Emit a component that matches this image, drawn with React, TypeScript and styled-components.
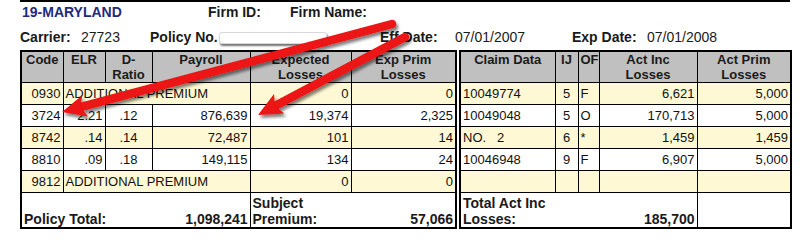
import React from "react";
import styled, { createGlobalStyle } from "styled-components";

const GlobalStyle = createGlobalStyle`
  body {
    margin: 0;
    background: #fff;
    font-family: "Liberation Sans", Arial, sans-serif;
    color: #111;
  }
`;

const Page = styled.div`
  position: relative;
  width: 805px;
  height: 243px;
  padding-left: 20px;
  box-sizing: border-box;
`;

const Header = styled.div`
  width: 770px;
  border-top: 2px solid #000;
`;

const HeaderRow = styled.div`
  display: flex;
  align-items: center;
  height: 20px;
  font-size: 14px;
`;

const SecondRow = styled(HeaderRow)`
  height: 18px;
  margin-top: 6px;
  margin-bottom: 4px;
`;

const Title = styled.span`
  width: 186px;
  padding-left: 2px;
  font-weight: bold;
  color: #1f2a7c;
`;

const Label = styled.span<{ $w: number }>`
  width: ${(p) => p.$w}px;
  font-weight: bold;
  color: #1a1a1a;
  flex-shrink: 0;
`;

const Value = styled.span<{ $w: number }>`
  width: ${(p) => p.$w}px;
  color: #1a1a1a;
  flex-shrink: 0;
`;

const Redacted = styled.span`
  width: 106px;
  height: 10px;
  margin-top: 2px;
  margin-right: 53px;
  background: #fff;
  border: 1px solid #d8d8d8;
  border-radius: 3px;
  box-shadow: 1px 2px 2px rgba(0, 0, 0, 0.55);
  flex-shrink: 0;
`;

const Tables = styled.div`
  display: flex;
  gap: 2px;
  align-items: flex-start;
`;

const Table = styled.table<{ $w: number }>`
  width: ${(p) => p.$w}px;
  table-layout: fixed;
  border-collapse: collapse;
  border: 2px solid #000;
  font-size: 13px;
`;

const Th = styled.th`
  background: #c0c0c0;
  border: 1px solid #000;
  height: 30px;
  padding: 0 2px;
  vertical-align: top;
  font-weight: bold;
  line-height: 15px;
  color: #1a1a1a;
`;

const Tr = styled.tr<{ $alt?: boolean }>`
  background: ${(p) => (p.$alt ? "#fff8d4" : "#fff")};
`;

const Td = styled.td<{ $align?: "left" | "right" | "center" }>`
  border: 1px solid #000;
  height: 21px;
  padding: 0 2px;
  text-align: ${(p) => p.$align ?? "right"};
  white-space: nowrap;
  overflow: hidden;
  line-height: 16px;
`;

const TotalCell = styled.td`
  border: 1px solid #000;
  height: 34px;
  padding: 0 2px;
  vertical-align: bottom;
`;

const TotalInner = styled.div`
  display: flex;
  justify-content: space-between;
  align-items: flex-end;
  font-size: 14px;
  line-height: 16px;
  font-weight: bold;
  color: #1a1a1a;
`;

const Arrows = styled.svg`
  position: absolute;
  left: 0;
  top: 0;
  pointer-events: none;
`;

type ArrowProps = { x1: number; y1: number; x2: number; y2: number };

const Arrow = ({ x1, y1, x2, y2 }: ArrowProps) => {
  const len = Math.hypot(x2 - x1, y2 - y1);
  const ang = (Math.atan2(y2 - y1, x2 - x1) * 180) / Math.PI;
  return (
    <g transform={`translate(${x2} ${y2}) rotate(${ang})`}>
      <line x1={-len} y1={0} x2={-16} y2={0} stroke="#ec1212" strokeWidth={8.5} strokeLinecap="round" />
      <polygon points="0,0 -24,-11 -19,0 -24,11" fill="#ec1212" />
    </g>
  );
};

const leftRows = [
  { code: "0930", add: true, exp: "0", prim: "0" },
  { code: "3724", elr: "2.21", d: ".12", pay: "876,639", exp: "19,374", prim: "2,325" },
  { code: "8742", elr: ".14", d: ".14", pay: "72,487", exp: "101", prim: "14" },
  { code: "8810", elr: ".09", d: ".18", pay: "149,115", exp: "134", prim: "24" },
  { code: "9812", add: true, exp: "0", prim: "0" },
];

const rightRows = [
  { claim: "10049774", ij: "5", of: "F", inc: "6,621", prim: "5,000" },
  { claim: "10049048", ij: "5", of: "O", inc: "170,713", prim: "5,000" },
  { claim: "NO.\u00a0\u00a0\u00a02", ij: "6", of: "*", inc: "1,459", prim: "1,459" },
  { claim: "10046948", ij: "9", of: "F", inc: "6,907", prim: "5,000" },
  { claim: "", ij: "", of: "", inc: "", prim: "" },
];

export default function App() {
  return (
    <Page>
      <GlobalStyle />
      <Header>
        <HeaderRow>
          <Title>19-MARYLAND</Title>
          <Label $w={82}>Firm ID:</Label>
          <Label $w={100}>Firm Name:</Label>
        </HeaderRow>
        <SecondRow>
          <Label $w={61}>Carrier:</Label>
          <Value $w={69}>27723</Value>
          <Label $w={69}>Policy No.</Label>
          <Redacted />
          <Label $w={75}>Eff Date:</Label>
          <Value $w={117}>07/01/2007</Value>
          <Label $w={75}>Exp Date:</Label>
          <Value $w={80}>07/01/2008</Value>
        </SecondRow>
      </Header>
      <Tables>
        <Table $w={435}>
          <colgroup>
            <col style={{ width: 42 }} />
            <col style={{ width: 42 }} />
            <col style={{ width: 47 }} />
            <col style={{ width: 98 }} />
            <col style={{ width: 101 }} />
            <col style={{ width: 105 }} />
          </colgroup>
          <thead>
            <tr>
              <Th>Code</Th>
              <Th>ELR</Th>
              <Th>D-<br />Ratio</Th>
              <Th>Payroll</Th>
              <Th>Expected<br />Losses</Th>
              <Th>Exp Prim<br />Losses</Th>
            </tr>
          </thead>
          <tbody>
            {leftRows.map((r, i) => (
              <Tr key={r.code} $alt={i % 2 === 0}>
                <Td>{r.code}</Td>
                {r.add ? (
                  <Td $align="left" colSpan={3}>ADDITIONAL PREMIUM</Td>
                ) : (
                  <>
                    <Td>{r.elr}</Td>
                    <Td $align="center">{r.d}</Td>
                    <Td>{r.pay}</Td>
                  </>
                )}
                <Td>{r.exp}</Td>
                <Td>{r.prim}</Td>
              </Tr>
            ))}
            <tr>
              <TotalCell colSpan={4}>
                <TotalInner>
                  <span>Policy Total:</span>
                  <span>1,098,241</span>
                </TotalInner>
              </TotalCell>
              <TotalCell colSpan={2}>
                <TotalInner>
                  <span>Subject<br />Premium:</span>
                  <span>57,066</span>
                </TotalInner>
              </TotalCell>
            </tr>
          </tbody>
        </Table>
        <Table $w={331}>
          <colgroup>
            <col style={{ width: 95 }} />
            <col style={{ width: 23 }} />
            <col style={{ width: 21 }} />
            <col style={{ width: 98 }} />
            <col style={{ width: 94 }} />
          </colgroup>
          <thead>
            <tr>
              <Th>Claim Data</Th>
              <Th>IJ</Th>
              <Th>OF</Th>
              <Th>Act Inc<br />Losses</Th>
              <Th>Act Prim<br />Losses</Th>
            </tr>
          </thead>
          <tbody>
            {rightRows.map((r, i) => (
              <Tr key={i} $alt={i % 2 === 0}>
                <Td $align="left">{r.claim}</Td>
                <Td $align="center">{r.ij}</Td>
                <Td $align="left">{r.of}</Td>
                <Td>{r.inc}</Td>
                <Td>{r.prim}</Td>
              </Tr>
            ))}
            <tr>
              <TotalCell colSpan={4}>
                <TotalInner>
                  <span>Total Act Inc<br />Losses:</span>
                  <span>185,700</span>
                </TotalInner>
              </TotalCell>
              <TotalCell />
            </tr>
          </tbody>
        </Table>
      </Tables>
      <Arrows width={805} height={243}>
        <defs>
          <filter id="shadow" x="-10%" y="-30%" width="120%" height="160%">
            <feDropShadow dx="2" dy="3" stdDeviation="1.6" floodColor="#000" floodOpacity="0.5" />
          </filter>
        </defs>
        <g filter="url(#shadow)">
          <Arrow x1={392} y1={24} x2={62} y2={112} />
          <Arrow x1={405} y1={37} x2={258} y2={115} />
        </g>
      </Arrows>
    </Page>
  );
}
